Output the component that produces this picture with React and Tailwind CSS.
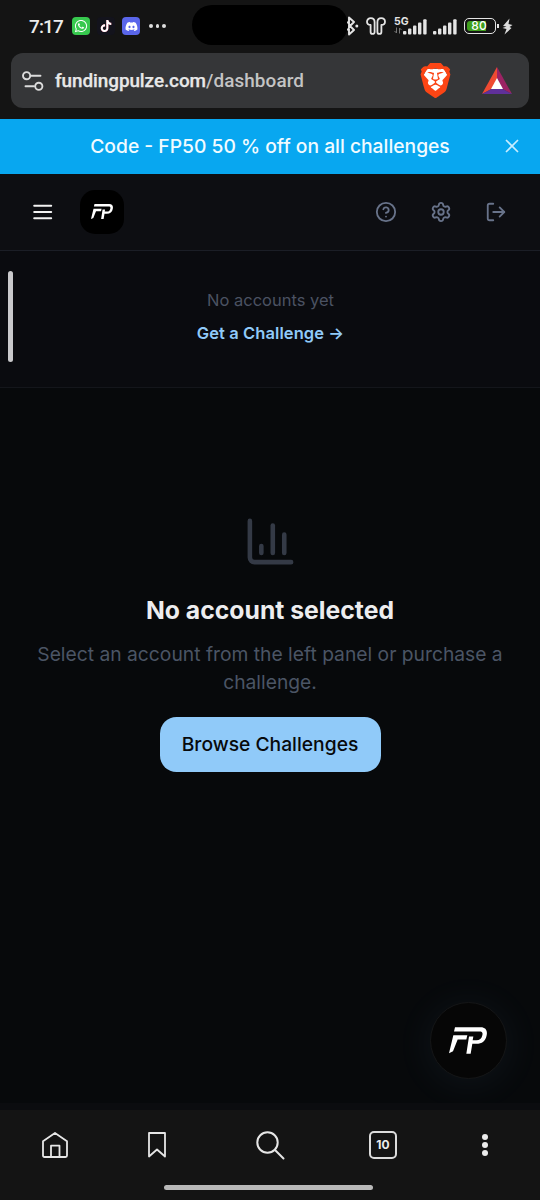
import React from "react";
import { CircleQuestionMark, Settings, LogOut, ChartColumn, X } from "lucide-react";
import { FaWhatsapp, FaTiktok, FaDiscord } from "react-icons/fa";
import { SiBrave } from "react-icons/si";

function FPLogo({ className }) {
  return (
    <svg viewBox="148 137 114 80" className={className} fill="#fff">
      <path d="M166 137H243C258 137 264 147 261 161C258 178 247 187 230 187H218L213 217H200L208 165H221L219 176H230C240 176 246 171 248 161C250 153 247 150 239 150H163Z" />
      <path d="M161 161H203L200 174H174L160 209L148 215Z" />
    </svg>
  );
}

function Signal({ className }) {
  return (
    <svg viewBox="0 0 24 16" className={className} fill="#e4e4e4">
      <rect x="0" y="12" width="3.4" height="3.5" rx="1" />
      <rect x="5" y="9.5" width="3.4" height="6" rx="1" />
      <rect x="10" y="6.5" width="3.4" height="9" rx="1" />
      <rect x="15" y="3.5" width="3.4" height="12" rx="1" />
      <rect x="20.2" y="0.3" width="3.4" height="15.2" rx="1" />
    </svg>
  );
}

function StatusBar() {
  return (
    <div className="flex h-[53px] items-start pl-[29px]">
      <div className="mt-[15px] w-[43px] font-[Roboto] text-[19px] leading-6 font-medium tracking-[-0.9px] whitespace-nowrap text-[#ececec]">7:17</div>
      <div className="mt-[17px] flex h-[18px] w-[18px] items-center justify-center rounded-[4px] bg-[#37c94e] text-white">
        <FaWhatsapp size={14} />
      </div>
      <div className="mt-[17px] ml-[7px] flex h-[18px] w-[18px] items-center justify-center rounded-[4px] bg-[#13131c] text-white">
        <FaTiktok size={12} className="drop-shadow-[0.6px_0.4px_0_#e0305a]" />
      </div>
      <div className="mt-[17px] ml-[7px] flex h-[18px] w-[18px] items-center justify-center rounded-[4px] bg-[#5a66ea] text-white">
        <FaDiscord size={13} />
      </div>
      <div className="mt-[24px] ml-[9px] flex gap-[3px]">
        <span className="h-[3.5px] w-[3.5px] rounded-full bg-[#dedede]" />
        <span className="h-[3.5px] w-[3.5px] rounded-full bg-[#dedede]" />
        <span className="h-[3.5px] w-[3.5px] rounded-full bg-[#dedede]" />
      </div>
      <div className="mt-[5px] ml-[26.5px] h-[40px] w-[156px] shrink-0 rounded-full bg-black" />
      <svg viewBox="0 0 12 20" className="mt-[16px] -ml-[1px] h-[20px] w-[12px] shrink-0" fill="none" stroke="#e4e4e4" strokeWidth="1.9" strokeLinejoin="round">
        <path d="M0.5 5.5L3 10L0.5 14.5M2 1.5V18.5L7 14L3 10L7 6Z" />
        <circle cx="9.8" cy="10" r="1.5" fill="#e4e4e4" stroke="none" />
      </svg>
      <svg viewBox="0 0 20 18" className="mt-[17px] ml-[7px] h-[18px] w-[20px] shrink-0" fill="none" stroke="#e4e4e4" strokeWidth="1.8" strokeLinejoin="round">
        <path d="M8.6 5C8.6 2.5 7 1.2 4.8 1.2C2.5 1.2 1 2.8 1 4.8C1 7 2.6 8 4.6 8V15C4.6 17.6 8.6 17.6 8.6 15Z" />
        <path d="M11.4 5C11.4 2.5 13 1.2 15.2 1.2C17.5 1.2 19 2.8 19 4.8C19 7 17.4 8 15.4 8V15C15.4 17.6 11.4 17.6 11.4 15Z" />
      </svg>
      <div className="mt-[16px] ml-[8px] flex w-[9px] shrink-0 flex-col items-start">
        <span className="font-[Inter] text-[10.5px] leading-[11px] font-bold text-[#e4e4e4]">5G</span>
        <svg viewBox="0 0 8 7" className="h-[7px] w-[8px]" fill="none" stroke="#777" strokeWidth="1">
          <path d="M2.5 0.5V6L0.5 4M5.5 6.5V1L7.5 3" />
        </svg>
      </div>
      <Signal className="mt-[18.5px] h-[16px] w-[24px] shrink-0" />
      <Signal className="mt-[18.5px] ml-[6px] h-[16px] w-[24px] shrink-0" />
      <div className="mt-[18px] ml-[7px] flex h-[16px] w-[32px] shrink-0 rounded-[5px] border-[1.5px] border-[#e4e4e4] p-[2px]">
        <div className="flex h-full w-full items-center justify-center rounded-[3px] bg-[linear-gradient(90deg,#3f9f1c_72%,transparent_72%)] pr-[2px] font-[Inter] text-[12px] leading-none font-medium text-white">80</div>
      </div>
      <div className="mt-[24px] ml-[1px] h-[4px] w-[1.5px] shrink-0 bg-[#e4e4e4]" />
      <svg viewBox="0 0 11 17" className="mt-[18px] ml-[3px] h-[17px] w-[11px] shrink-0" fill="#dcdcdc">
        <path d="M7.5 0.5L1 8L4.5 8.5L0.5 10L4.5 11L2.5 16.5L9.5 10L7.5 9L10.5 7L6.5 6Z" />
      </svg>
    </div>
  );
}

function BraveShield() {
  return (
    <div className="ml-auto grid h-[36px] w-[36px] place-items-center">
      <svg viewBox="0 0 24 24" className="col-start-1 row-start-1 h-[35px] w-[35px]">
        <path d="M6 4H18L20 8L18 15L12 20L6 15L4 8Z" fill="#fff" />
      </svg>
      <SiBrave size={35} className="col-start-1 row-start-1 text-[#fb4515]" />
    </div>
  );
}

function AddressBar() {
  return (
    <div className="mx-[11px] flex h-[55px] items-center rounded-[12px] bg-[#353638] pr-[16px] pl-[11px]">
      <svg viewBox="0 0 22 20" className="h-[20px] w-[22px]" fill="none" stroke="#dcdcdc" strokeWidth="1.9" strokeLinecap="round">
        <circle cx="4.6" cy="4.7" r="3.6" />
        <path d="M9 4.7H18.5M3.5 15.3H12" />
        <circle cx="16.8" cy="15.3" r="3.6" />
      </svg>
      <div className="ml-[11px] font-[Roboto] text-[18.9px] leading-6 font-medium whitespace-nowrap text-[#e8e8e8]">
        <span className="tracking-[-0.07px] [-webkit-text-stroke:0.25px_#e8e8e8]">fundingpulze.com</span>
        <span className="tracking-[0.1px] text-[#c4c4c4]">/dashboard</span>
      </div>
      <BraveShield />
      <svg viewBox="0 0 32 30" className="ml-[28px] h-[30px] w-[32px]">
        <path d="M16 1L1 28L10.5 23L16 13Z" fill="#ef4a32" />
        <path d="M16 1L31 28L21.5 23L16 13Z" fill="#9c2364" />
        <path d="M1 28H31L21.5 23H10.5Z" fill="#60309a" />
        <path d="M16 12L10 23H22Z" fill="#fff" />
      </svg>
    </div>
  );
}

function Banner() {
  return (
    <div className="mt-[11px] flex h-[55px] items-center bg-[#08a7f0] pr-[17px] pl-[39px]">
      <div className="flex-1 text-center text-[19.25px] font-medium whitespace-nowrap text-[#f1fbff]">Code - FP50 50 % off on all challenges</div>
      <X size={22} strokeWidth={1.9} className="mb-[1px] text-[#c8edff]" />
    </div>
  );
}

function Header() {
  return (
    <div className="flex h-[77px] items-center border-b border-[#1b1e26] bg-[#0d0e12] pr-[33px] pl-[33px]">
      <svg viewBox="0 0 20 16" className="h-[16px] w-[20px]" stroke="#f2f2f2" strokeWidth="2" strokeLinecap="round">
        <path d="M1.2 1.7H18.2M1.2 8H18.2M1.2 14.2H18.2" />
      </svg>
      <div className="ml-[27px] flex h-[44px] w-[44px] items-center justify-center rounded-[15px] bg-black">
        <FPLogo className="mb-[1px] h-[15.5px] w-[22px]" />
      </div>
      <div className="ml-auto flex gap-[33px] text-[#68738a]">
        <CircleQuestionMark size={22} />
        <Settings size={22} />
        <LogOut size={22} />
      </div>
    </div>
  );
}

function AccountsPanel() {
  return (
    <div className="flex h-[137px] border-b border-[#14161b] bg-[#0a0b0f] pr-[12px] pl-[8px]">
      <div className="mt-[20px] h-[91px] w-[5px] rounded-full bg-[#c9c9cb]" />
      <div className="flex flex-1 flex-col items-center pt-[37px] whitespace-nowrap">
        <div className="text-[16.5px] leading-[24px] text-[#4b5262]">No accounts yet</div>
        <div className="mt-[9px] text-[16.5px] leading-[24px] font-semibold tracking-[0.08px] text-[#90caf9]">Get a Challenge →</div>
      </div>
    </div>
  );
}

function EmptyState() {
  return (
    <main className="relative flex h-[715px] flex-col items-center overflow-hidden bg-[#07090b] pt-[126px]">
      <ChartColumn size={55} className="text-[#343a46]" />
      <h1 className="mt-[22px] text-[24.75px] leading-[38px] font-bold text-[#ededef]">No account selected</h1>
      <p className="mt-[12px] text-center text-[19.25px] leading-[27.5px] whitespace-nowrap text-[#4b5565]">
        Select an account from the left panel or purchase a<br />challenge.
      </p>
      <button className="mt-[21px] h-[55px] w-[221px] rounded-[16.5px] bg-[#90caf9] text-[19.25px] font-medium text-[#07090b]">Browse Challenges</button>
      <div className="absolute top-[614px] left-[430px] flex h-[77px] w-[77px] items-center justify-center rounded-full border border-[#151617] bg-[#060606] shadow-[0_4px_40px_rgba(144,202,249,0.07)]">
        <FPLogo className="mr-[1px] mb-[1px] h-[27px] w-[38px]" />
      </div>
    </main>
  );
}

function BottomBar() {
  return (
    <div className="flex flex-1 flex-col bg-[#141414]">
      <div className="h-[7px] bg-[#0b0c0f]" />
      <div className="flex h-[70px] items-center pr-[52px] pl-[42px]">
        <svg viewBox="0 0 26 26" className="h-[26px] w-[26px]" fill="none" stroke="#e6e6e6" strokeWidth="1.8" strokeLinejoin="round">
          <path d="M1 9.2L13 1L25 9.2V23.5Q25 25 23.5 25H2.5Q1 25 1 23.5ZM9 25V13.7H17.5V25" />
        </svg>
        <svg viewBox="0 0 18 26" className="ml-[80px] h-[26px] w-[18px]" fill="none" stroke="#e6e6e6" strokeWidth="1.8" strokeLinejoin="round">
          <path d="M1 1H17V24.5L9 17.5L1 24.5Z" />
        </svg>
        <svg viewBox="0 0 29 29" className="ml-[90px] h-[29px] w-[29px]" fill="none" stroke="#e6e6e6" strokeWidth="2" strokeLinecap="round">
          <circle cx="11.5" cy="11.5" r="10.2" />
          <path d="M19 19L27.5 27.5" />
        </svg>
        <div className="ml-[84px] flex h-[28px] w-[28px] items-center justify-center rounded-[5px] border-2 border-[#dcdcdc] font-[Inter] text-[12px] leading-none font-bold text-[#ececec]">10</div>
        <div className="ml-auto flex flex-col gap-[2px]">
          <span className="h-[6px] w-[6px] rounded-full bg-[#ececec]" />
          <span className="h-[6px] w-[6px] rounded-full bg-[#ececec]" />
          <span className="h-[6px] w-[6px] rounded-full bg-[#ececec]" />
        </div>
      </div>
      <div className="mt-[5px] ml-[164px] h-[5px] w-[209px] rounded-full bg-[#b9b9b9]" />
    </div>
  );
}

export default function App() {
  return (
    <div className="flex h-[1200px] w-[540px] flex-col overflow-hidden bg-[#141414] font-[Inter]">
      <StatusBar />
      <AddressBar />
      <Banner />
      <Header />
      <AccountsPanel />
      <EmptyState />
      <BottomBar />
    </div>
  );
}
